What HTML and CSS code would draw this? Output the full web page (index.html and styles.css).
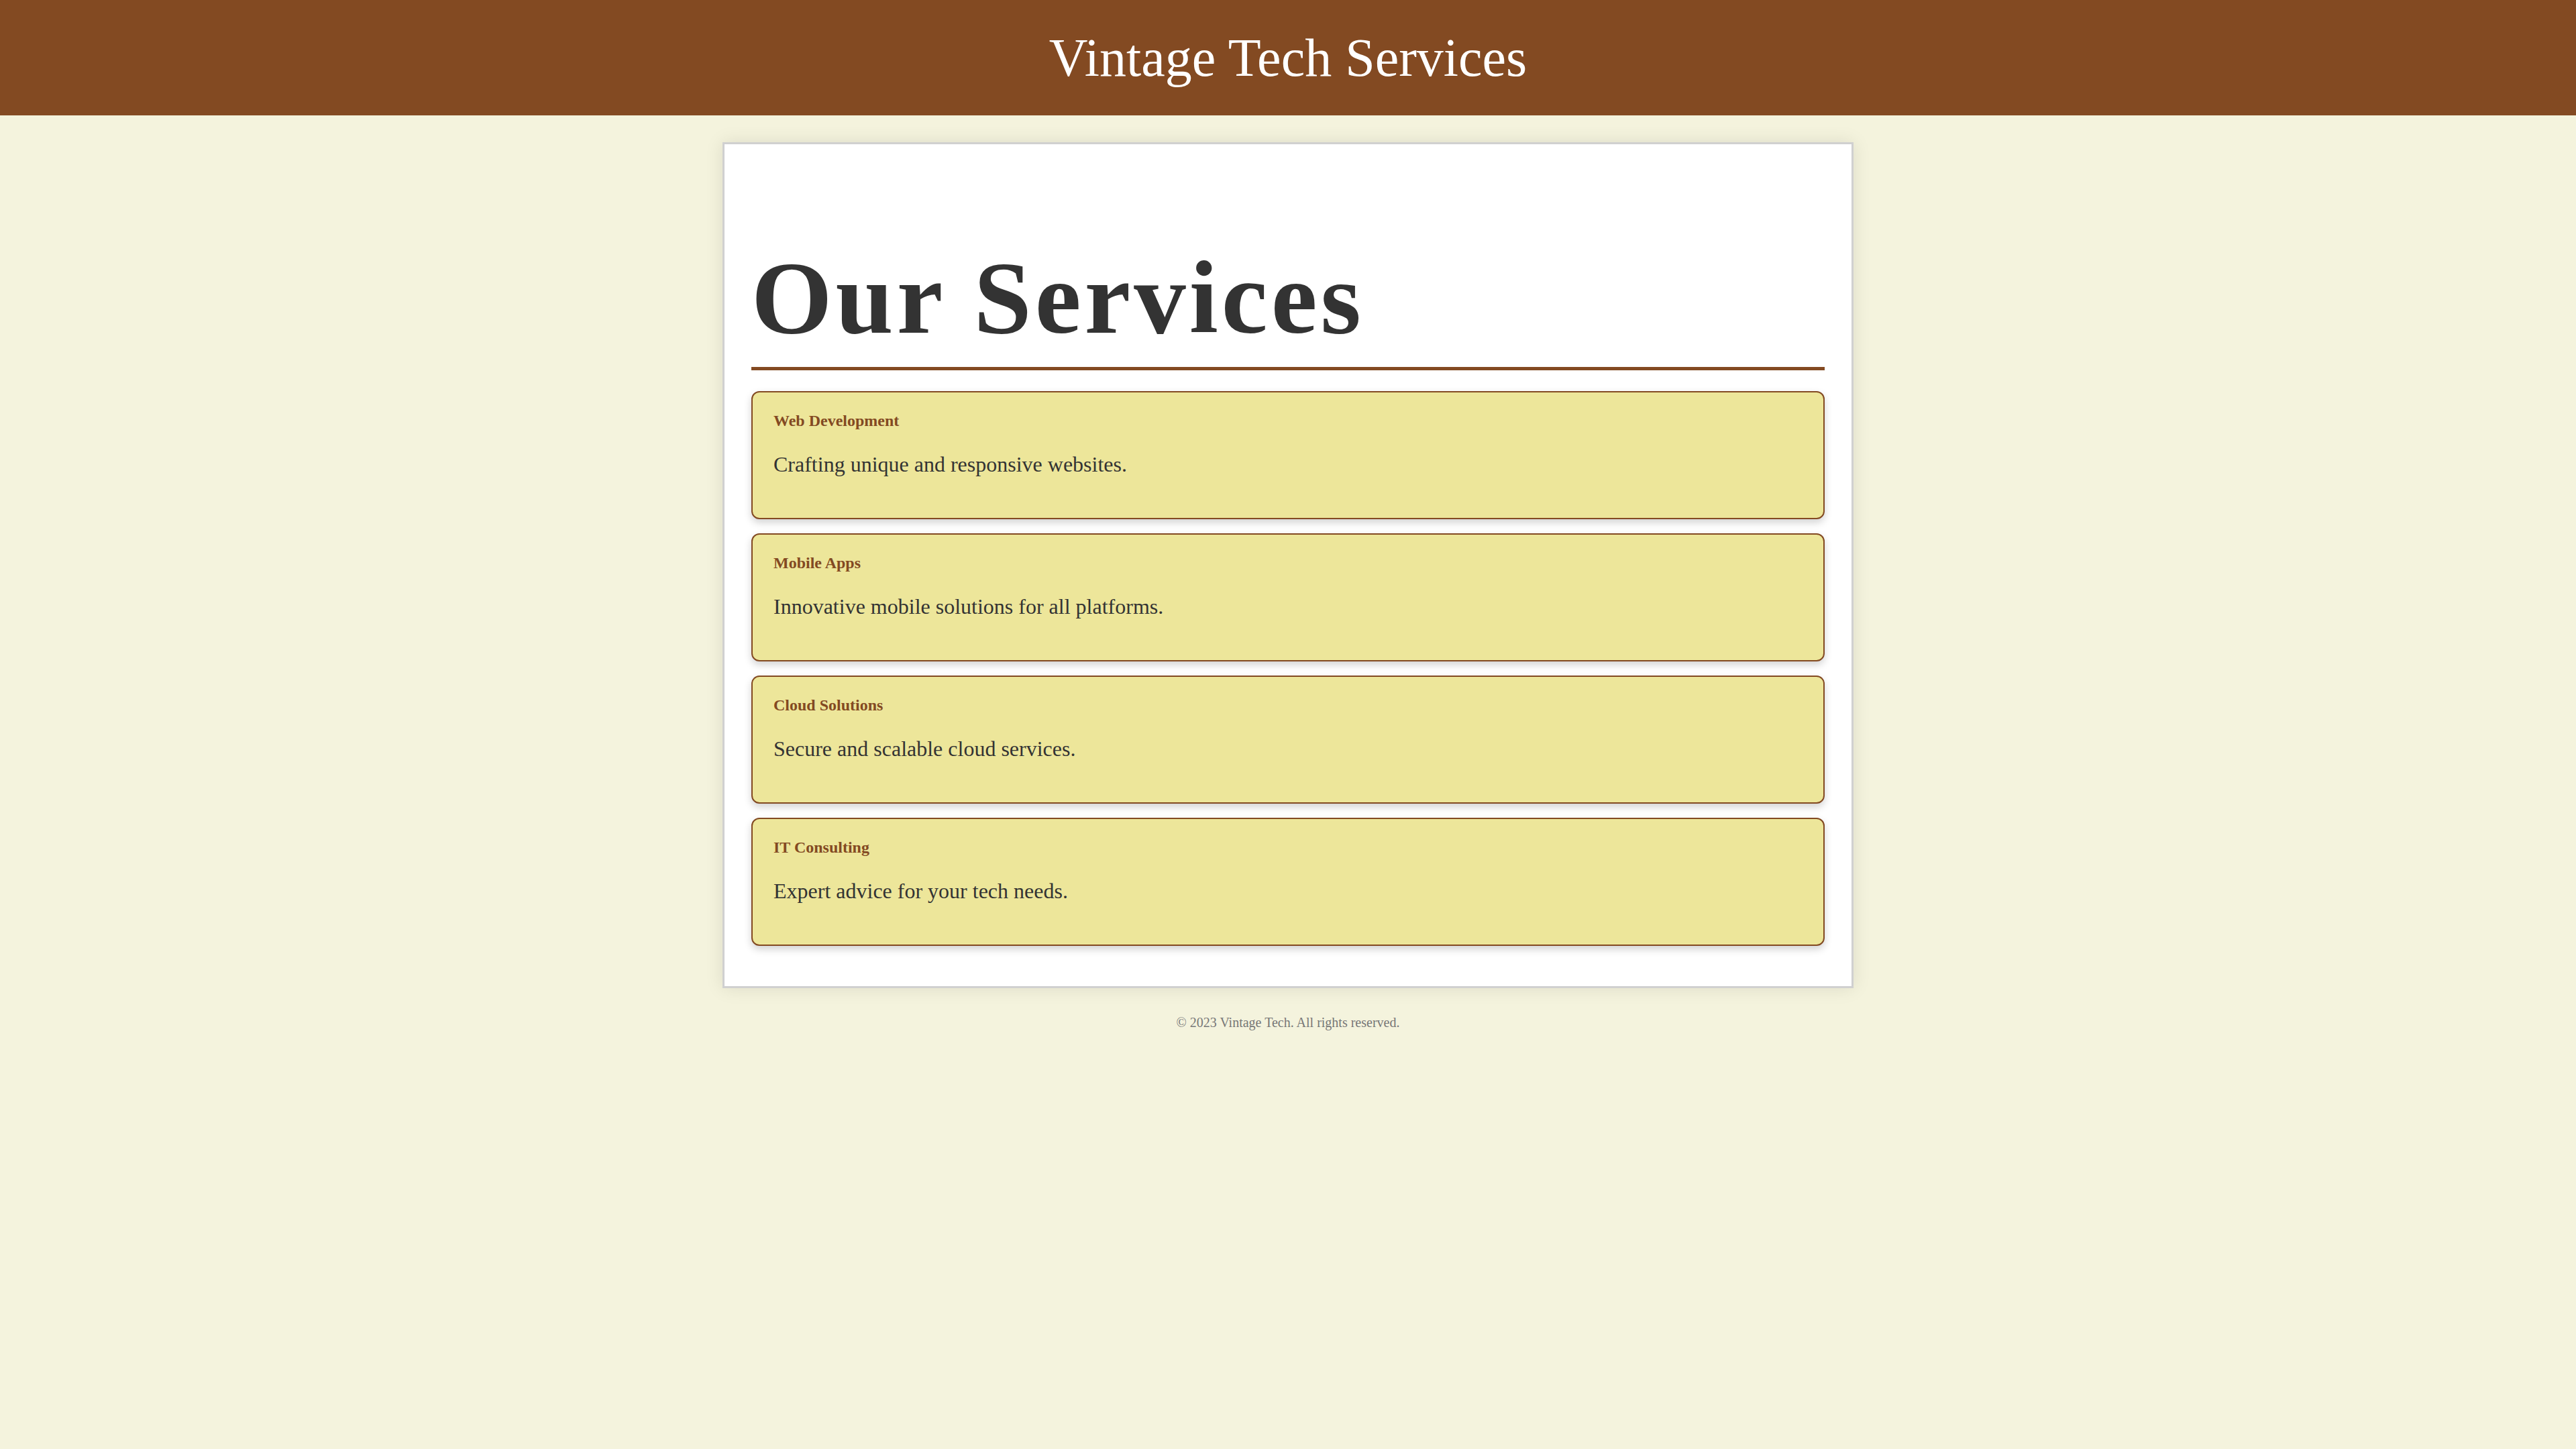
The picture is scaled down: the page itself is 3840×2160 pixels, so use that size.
FILE: index.html
```html
<!DOCTYPE html>
<html lang="en">
<head>
<meta charset="utf-8">
<title>Vintage Tech Services</title>
<link rel="stylesheet" href="styles.css">
</head>
<body>
<header class="site-header">
  <h1 class="site-title">Vintage Tech Services</h1>
</header>
<main class="container">
  <h2 class="section-title">Our Services</h2>
  <div class="service-card">
    <h3 class="service-name">Web Development</h3>
    <p class="service-desc">Crafting unique and responsive websites.</p>
  </div>
  <div class="service-card">
    <h3 class="service-name">Mobile Apps</h3>
    <p class="service-desc">Innovative mobile solutions for all platforms.</p>
  </div>
  <div class="service-card">
    <h3 class="service-name">Cloud Solutions</h3>
    <p class="service-desc">Secure and scalable cloud services.</p>
  </div>
  <div class="service-card">
    <h3 class="service-name">IT Consulting</h3>
    <p class="service-desc">Expert advice for your tech needs.</p>
  </div>
</main>
<footer class="site-footer">
  <p class="copyright">&copy; 2023 Vintage Tech. All rights reserved.</p>
</footer>
</body>
</html>
```

FILE: styles.css
```css
html, body {
  margin: 0;
  padding: 0;
}

body {
  background: #f4f3dd;
  font-family: "Liberation Serif", "Times New Roman", serif;
  color: #333333;
}

.site-header {
  background: #834a22;
  padding: 40px;
  text-align: center;
}

.site-title {
  margin: 0;
  font-size: 80px;
  font-weight: normal;
  line-height: 92px;
  color: #ffffff;
}

.container {
  box-sizing: border-box;
  width: 1686px;
  margin: 40px auto 0;
  padding: 40px;
  background: #ffffff;
  border: 3px solid #d0d0d0;
  box-shadow: 0 0 25px rgba(0, 0, 0, 0.1);
}

.section-title {
  margin: 110px 0 31px;
  padding-bottom: 23px;
  border-bottom: 5px solid #834a22;
  font-size: 155px;
  line-height: 159px;
  font-weight: bold;
  letter-spacing: 5px;
  color: #333333;
}

.service-card {
  background: #ede69a;
  border: 2px solid #834a22;
  border-radius: 12px;
  padding: 28px 31px 25px;
  margin-bottom: 21px;
  box-shadow: 0 5px 12px rgba(0, 0, 0, 0.18);
}

.service-card:last-child {
  margin-bottom: 20px;
}

.service-name {
  margin: 0;
  font-size: 24px;
  line-height: 28px;
  font-weight: bold;
  color: #834a22;
}

.service-desc {
  margin: 33px 0 36px;
  font-size: 32px;
  line-height: 37px;
  color: #333333;
}

.site-footer {
  padding-top: 40px;
  text-align: center;
}

.copyright {
  margin: 0;
  font-size: 20px;
  line-height: 23px;
  color: #777777;
}
```
